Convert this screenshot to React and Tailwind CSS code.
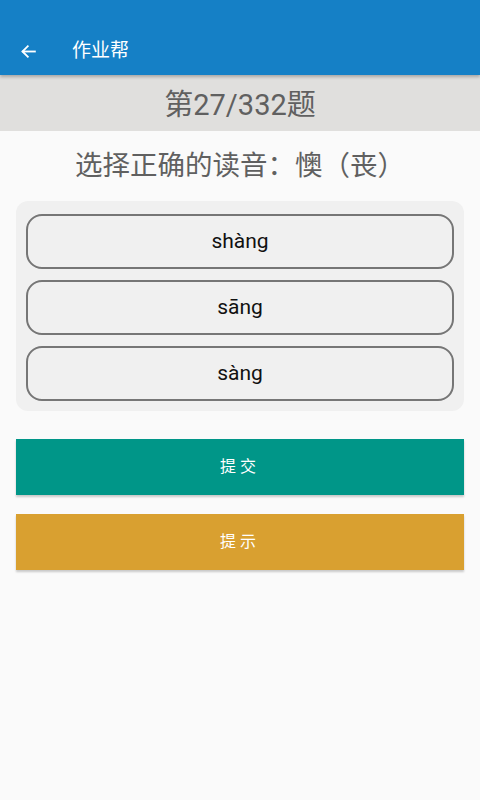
import React from "react";

const cjk = { fontFamily: "Roboto, 'Noto Sans CJK SC', sans-serif" };

const options = ["shàng", "sāng", "sàng"];

function App() {
  return (
    <div className="w-full min-h-screen bg-[#fafafa]" style={cjk}>
      {/* Header */}
      <div className="h-[75px] bg-[#1580c6] flex items-center pt-[27px] shadow-[0_2px_3px_rgba(0,0,0,0.25)] relative z-10">
        <svg className="ml-[20px] w-[17px] h-[17px]" viewBox="0 0 24 24" fill="none" stroke="white" strokeWidth="2.6" strokeLinecap="square">
          <path d="M21 12H4" />
          <path d="M11 4.5L3.5 12L11 19.5" />
        </svg>
        <span className="ml-[35px] text-white text-[19px]">作业帮</span>
      </div>

      {/* Question counter */}
      <div className="h-[56px] bg-[#e0dfdd] flex items-center justify-center pt-[6px]">
        <span className="text-[29px] text-[#606060]">第27/332题</span>
      </div>

      {/* Question */}
      <div className="h-[70px] flex items-center justify-center">
        <span className="text-[27.5px] text-[#606060]">选择正确的读音：懊（丧）</span>
      </div>

      {/* Options */}
      <div className="mx-4 bg-[#f0f0f0] rounded-xl px-[10px] pt-[13px] pb-[10px] flex flex-col gap-[11px]">
        {options.map((o) => (
          <div
            key={o}
            className="h-[55px] rounded-[16px] border-2 border-[#767676] flex items-center justify-center text-[21px] text-[#111]"
          >
            {o}
          </div>
        ))}
      </div>

      {/* Buttons */}
      <div className="mx-4 mt-[28px] flex flex-col gap-[19px]">
        <div className="h-[56px] bg-[#009688] flex items-center justify-center text-white text-[16px] tracking-[4px] shadow-[0_2px_2px_rgba(0,0,0,0.2)]">
          提交
        </div>
        <div className="h-[56px] bg-[#d9a030] flex items-center justify-center text-white text-[16px] tracking-[4px] shadow-[0_2px_2px_rgba(0,0,0,0.2)]">
          提示
        </div>
      </div>
    </div>
  );
}

export default App;
